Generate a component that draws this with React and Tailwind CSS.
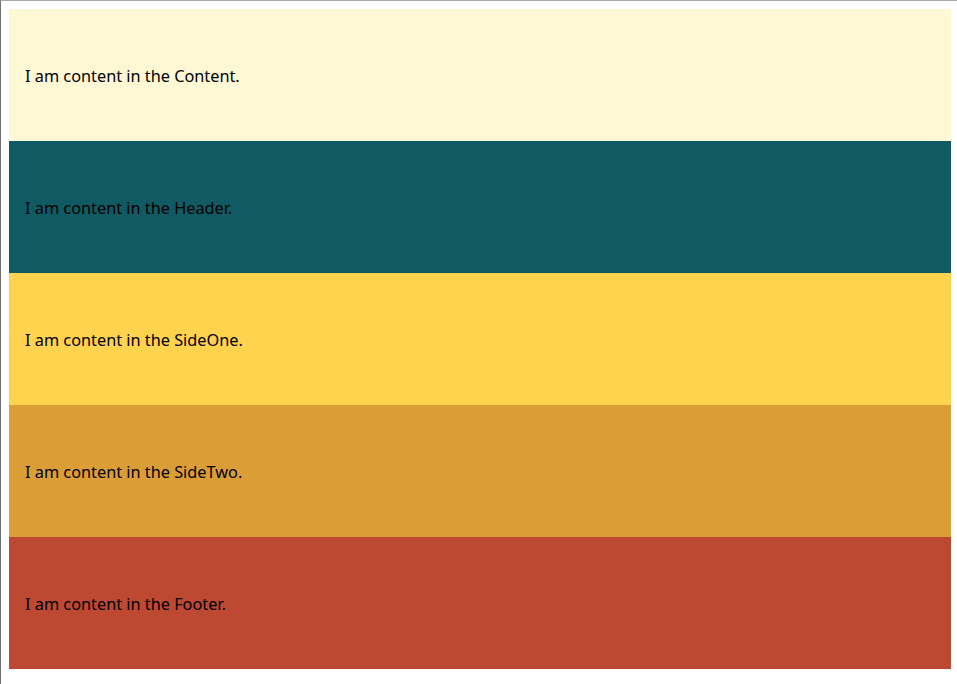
import React from 'react'

const sections = [
  { name: 'Content', bg: 'bg-[#fff8d5]' },
  { name: 'Header', bg: 'bg-[#105b63]' },
  { name: 'SideOne', bg: 'bg-[#ffd34e]' },
  { name: 'SideTwo', bg: 'bg-[#db9e36]' },
  { name: 'Footer', bg: 'bg-[#bd4932]' },
]

export default function App() {
  return (
    <div className="h-[684px] bg-white border-t border-l border-t-[#a9a9a9] border-l-[#707070] pt-2 pl-2 pr-[6px] font-['Noto_Sans',sans-serif] text-[16.3px] text-black">
      {sections.map((s) => (
        <div key={s.name} className={`${s.bg} h-[132px] flex items-center px-4 pt-[2px]`}>
          <p>I am content in the {s.name}.</p>
        </div>
      ))}
    </div>
  )
}
